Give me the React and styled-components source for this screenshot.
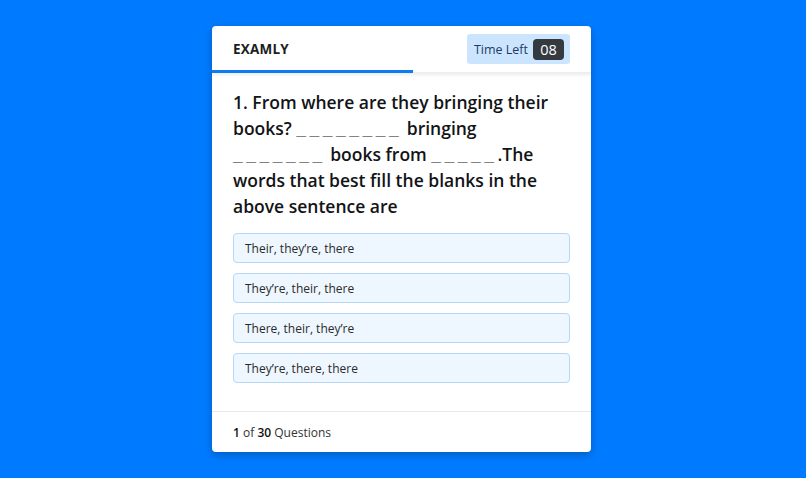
import React from 'react';
import styled, { createGlobalStyle } from 'styled-components';

const GlobalStyle = createGlobalStyle`
  html, body {
    margin: 0;
    padding: 0;
    background: #007bff;
    font-family: 'Open Sans', 'Liberation Sans', sans-serif;
  }
`;

const Page = styled.div`
  display: flex;
  justify-content: center;
  padding: 26px 3px 0 0;
  min-height: 478px;
  box-sizing: border-box;
`;

const Card = styled.div`
  width: 379px;
  height: 426px;
  background: #fff;
  border-radius: 4px;
  box-shadow: 0 3px 8px rgba(0, 0, 0, 0.25);
  display: flex;
  flex-direction: column;
  overflow: hidden;
`;

const Header = styled.div`
  position: relative;
  display: flex;
  align-items: center;
  justify-content: space-between;
  height: 46px;
  padding: 0 21px;
  box-shadow: 0 2px 3px rgba(0, 0, 0, 0.08);
  border-bottom: 1px solid #eceff2;
`;

const Progress = styled.div`
  position: absolute;
  left: 0;
  bottom: -1px;
  height: 3px;
  background: #0d7cf2;
`;

const Brand = styled.div`
  font-size: 13.5px;
  font-weight: 700;
  letter-spacing: 0.2px;
  color: #1c1e21;
`;

const Timer = styled.div`
  display: flex;
  align-items: center;
  gap: 5px;
  height: 30px;
  padding: 0 6px 0 7px;
  background: #cce5ff;
  border-radius: 3px;
  color: #1f3a66;
  font-size: 12.5px;
`;

const TimerValue = styled.span`
  display: inline-flex;
  align-items: center;
  justify-content: center;
  width: 31px;
  height: 21px;
  background: #343a40;
  color: #fff;
  border-radius: 4px;
  font-size: 14.5px;
`;

const Body = styled.div`
  flex: 1;
  padding: 16px 21px 0;
`;

const Question = styled.h2`
  margin: 0 0 14px;
  font-size: 17.5px;
  line-height: 26px;
  font-weight: 600;
  color: #121416;
`;

const Blank = styled.span`
  font-family: 'Liberation Sans', sans-serif;
  font-weight: 700;
  line-height: 1;
  letter-spacing: 3.5px;
`;

const Options = styled.div`
  display: flex;
  flex-direction: column;
  gap: 10px;
`;

const Option = styled.button`
  display: flex;
  align-items: center;
  height: 30px;
  padding: 0 11px;
  background: #eef7ff;
  border: 1px solid #b4d7f7;
  border-radius: 4px;
  font-family: inherit;
  font-size: 12px;
  color: #2a2a2a;
  text-align: left;
  cursor: pointer;
`;

const Footer = styled.div`
  height: 40px;
  display: flex;
  align-items: center;
  padding: 0 21px;
  border-top: 1px solid #e7e9ec;
  font-size: 12px;
  color: #333;
`;

const Strong = styled.span`
  font-weight: 600;
  color: #111;
`;

const OPTIONS = [
  'Their, they’re, there',
  'They’re, their, there',
  'There, their, they’re',
  'They’re, there, there',
];

export default function App() {
  return (
    <>
      <GlobalStyle />
      <Page>
        <Card>
          <Header>
            <Brand>EXAMLY</Brand>
            <Timer>
              Time Left <TimerValue>08</TimerValue>
            </Timer>
            <Progress style={{ width: '53%' }} />
          </Header>
          <Body>
            <Question>
              1. From where are they bringing their books? <Blank>________</Blank> bringing{' '}
              <Blank>_______</Blank> books from <Blank>_____</Blank>.The words that best fill the blanks in
              the above sentence are
            </Question>
            <Options>
              {OPTIONS.map((o) => (
                <Option key={o}>{o}</Option>
              ))}
            </Options>
          </Body>
          <Footer>
            <span>
              <Strong>1</Strong> of <Strong>30</Strong> Questions
            </span>
          </Footer>
        </Card>
      </Page>
    </>
  );
}
